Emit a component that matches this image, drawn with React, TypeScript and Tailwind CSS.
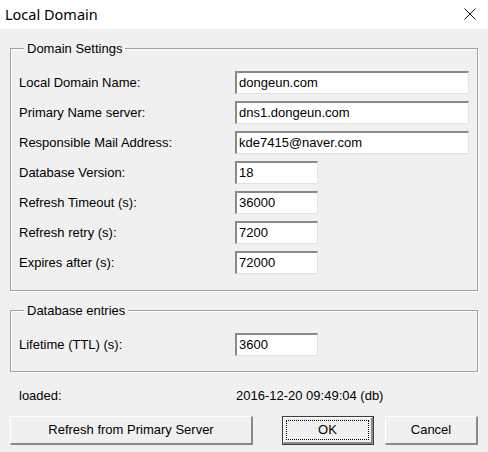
import React from "react";

const rows = [
  { label: "Local Domain Name:", value: "dongeun.com", wide: true },
  { label: "Primary Name server:", value: "dns1.dongeun.com", wide: true },
  { label: "Responsible Mail Address:", value: "kde7415@naver.com", wide: true },
  { label: "Database Version:", value: "18", wide: false },
  { label: "Refresh Timeout (s):", value: "36000", wide: false },
  { label: "Refresh retry (s):", value: "7200", wide: false },
  { label: "Expires after (s):", value: "72000", wide: false },
];

function Field({ label, value, wide }: { label: string; value: string; wide: boolean }) {
  return (
    <div className="flex h-[23px] items-center">
      <span className="w-[216px] shrink-0">{label}</span>
      <div
        className={`flex h-[23px] items-center border-t-2 border-l-2 border-r border-b border-t-[#8a8a8a] border-l-[#8a8a8a] border-r-[#e3e3e3] border-b-[#e3e3e3] bg-white pl-[2px] ${
          wide ? "w-[234px]" : "w-[83px]"
        }`}
      >
        {value}
      </div>
    </div>
  );
}

function Group({ title, children, className }: { title: string; children: React.ReactNode; className?: string }) {
  return (
    <fieldset
      className={`border border-[#a0a0a0] shadow-[inset_1px_1px_0_#fff,1px_1px_0_#fff] pl-[8px] ${className ?? ""}`}
    >
      <legend className="ml-[5px] bg-[#f0f0f0] px-[3px] leading-[15px]">{title}</legend>
      {children}
    </fieldset>
  );
}

function Button({ children, className, isDefault }: { children: React.ReactNode; className?: string; isDefault?: boolean }) {
  if (isDefault) {
    return (
      <div className={`h-[29px] border border-[#3c3c3c] ${className ?? ""}`}>
        <div className="flex h-full items-center justify-center border-t border-l border-b-2 border-r-2 border-t-white border-l-white border-b-[#8a8a8a] border-r-[#8a8a8a] p-[2px]">
          <div className="flex h-full w-full items-center justify-center border border-dotted border-black">
            {children}
          </div>
        </div>
      </div>
    );
  }
  return (
    <div
      className={`flex h-[29px] items-center justify-center border-t border-l border-b-2 border-r-2 border-t-white border-l-white border-b-[#8a8a8a] border-r-[#8a8a8a] bg-[#f0f0f0] ${className ?? ""}`}
    >
      {children}
    </div>
  );
}

export default function App() {
  return (
    <div className="h-[452px] w-[488px] overflow-hidden bg-[#f0f0f0] font-['Liberation_Sans',Arial,sans-serif] text-[13px] text-black">
      <div className="flex h-[29px] items-center justify-between bg-white pl-[5px] pr-[12px]">
        <span className="font-['Noto_Sans',sans-serif] text-[14.5px]">Local Domain</span>
        <svg width="12" height="12" viewBox="0 0 12 12" className="mb-[2px]">
          <path d="M0.5 0.5 L11.5 11.5 M11.5 0.5 L0.5 11.5" stroke="#111" strokeWidth="1" />
        </svg>
      </div>

      <div className="px-[10px]">
        <Group title="Domain Settings" className="mt-[12px] h-[250px]">
          <div className="mt-[15px] flex flex-col gap-[7px]">
            {rows.map((r) => (
              <Field key={r.label} {...r} />
            ))}
          </div>
        </Group>

        <Group title="Database entries" className="mt-[12px] h-[69px]">
          <div className="mt-[15px]">
            <Field label="Lifetime (TTL) (s):" value="3600" wide={false} />
          </div>
        </Group>

        <div className="mt-[14px] flex pl-[9px]">
          <span className="w-[216px]">loaded:</span>
          <span className="pl-[1px]">2016-12-20 09:49:04 (db)</span>
        </div>

        <div className="mt-[10px] flex">
          <Button className="w-[243px]">Refresh from Primary Server</Button>
          <Button className="ml-[29px] w-[92px]" isDefault>
            OK
          </Button>
          <Button className="ml-[11px] w-[93px]">Cancel</Button>
        </div>
      </div>
    </div>
  );
}
